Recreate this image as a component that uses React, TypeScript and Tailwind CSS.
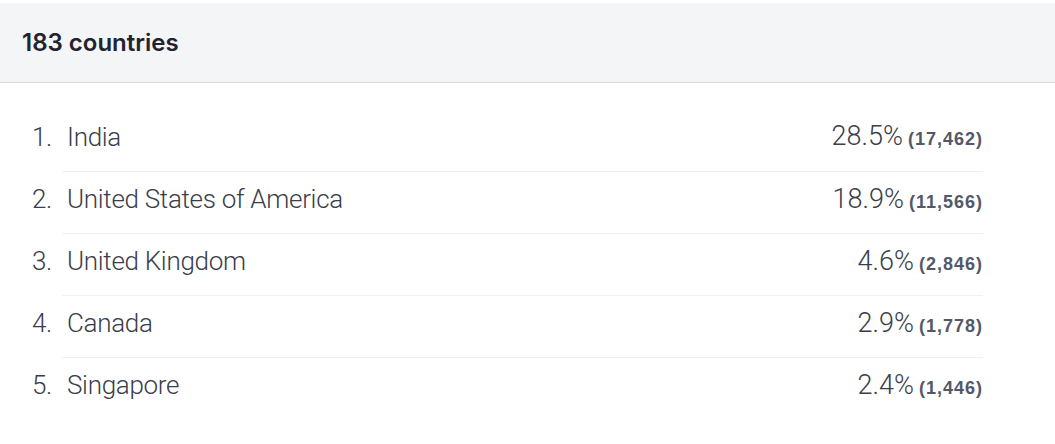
import React from 'react';

const countries = [
  { name: 'India', pct: '28.5%', count: '17,462' },
  { name: 'United States of America', pct: '18.9%', count: '11,566' },
  { name: 'United Kingdom', pct: '4.6%', count: '2,846' },
  { name: 'Canada', pct: '2.9%', count: '1,778' },
  { name: 'Singapore', pct: '2.4%', count: '1,446' },
];

const App: React.FC = () => {
  return (
    <div className="w-[1055px] h-[444px] bg-white pt-[3px] font-['Roboto',sans-serif]">
      <div className="h-[80px] bg-[#f4f5f7] border-b border-[#d9dbe0] flex items-center px-[22px]">
        <h2 className="text-[24px] font-semibold text-[#22232e] font-['Inter',sans-serif]">
          183 countries
        </h2>
      </div>

      <ol className="pt-[26px] pl-[62px] pr-[72px]">
        {countries.map((c, i) => (
          <li
            key={c.name}
            className={`relative h-[62px] pb-[7px] flex items-center justify-between ${i > 0 ? 'border-t border-[#f0f1f3]' : ''}`}
          >
            <span className="absolute right-full mr-[10px] text-[26px] font-light text-[#3a3d4a] tracking-[-0.3px] leading-none">{i + 1}.</span>
            <span className="pl-[5px] text-[26px] font-light text-[#3a3d4a] tracking-[-0.3px] leading-none">{c.name}</span>
            <span className="flex items-baseline gap-[5px] leading-none">
              <span className="text-[27px] font-light text-[#3a3d4a]">{c.pct}</span>
              <span className="text-[18px] font-bold text-[#535868] font-['Liberation_Sans',sans-serif] tracking-[1px]">({c.count})</span>
            </span>
          </li>
        ))}
      </ol>
    </div>
  );
};

export default App;
